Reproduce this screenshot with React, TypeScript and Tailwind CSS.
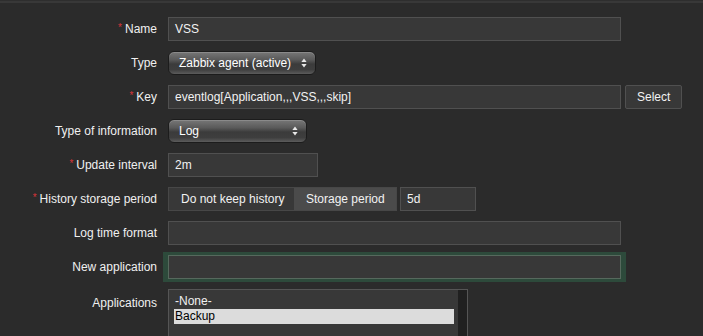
import React from 'react'

const font = { fontFamily: '"Liberation Sans", Arial, sans-serif' }

const Req = () => <span className="text-[#d8343a] text-[10px] relative -top-[2px] mr-[3px]">*</span>

const Label = ({ text, req }: { text: string; req?: boolean }) => (
  <div className="w-[158px] shrink-0 text-right text-[12px] text-[#f0f0f0] pr-[1px]">
    {req && <Req />}
    {text}
  </div>
)

const Input = ({ value = '', w, focus }: { value?: string; w: string; focus?: boolean }) => (
  <div
    className={`${w} h-[24px] flex items-center px-[6px] text-[12px] text-[#f2f2f2] bg-[#383838] border ${
      focus
        ? 'border-[#56695d] shadow-[-2px_0_0_3px_#2d4a3b,2px_0_0_3px_#2d4a3b]'
        : 'border-[#505050]'
    }`}
  >
    {value}
  </div>
)

const Arrows = () => (
  <svg width="6" height="10" viewBox="0 0 6 10" className="shrink-0">
    <path d="M3 0.5 L5.6 4 H0.4 Z" fill="#e8e8e8" />
    <path d="M3 9.5 L5.6 6 H0.4 Z" fill="#e8e8e8" />
  </svg>
)

const Select = ({ value, w }: { value: string; w: string }) => (
  <div
    className={`${w} h-[24px] flex items-center justify-between pl-[10px] pr-[8px] rounded-[6px] border border-[#1c1c1c] text-[12px] text-white bg-[linear-gradient(to_bottom,#777_0%,#5a5a5a_35%,#3b3b3b_55%,#3e3e3e_80%,#5c5c5c_100%)] shadow-[inset_0_1px_0_#8a8a8a]`}
  >
    <span>{value}</span>
    <Arrows />
  </div>
)

const Row = ({ children }: { children: React.ReactNode }) => (
  <div className="flex items-center gap-[10px] h-[24px]">{children}</div>
)

export default function App() {
  return (
    <div className="w-[703px] h-[336px] overflow-hidden bg-[#2b2b2b]" style={font}>
      <div className="h-[1px] bg-[#2e2e2e]" />
      <div className="h-[2px] bg-[#383838]" />
      <div className="flex flex-col gap-[10px] pt-[14px]">
        <Row>
          <Label text="Name" req />
          <Input value="VSS" w="w-[453px]" />
        </Row>
        <Row>
          <Label text="Type" />
          <Select value="Zabbix agent (active)" w="w-[148px]" />
        </Row>
        <Row>
          <Label text="Key" req />
          <Input value="eventlog[Application,,,VSS,,,skip]" w="w-[453px]" />
          <button className="-ml-[6px] h-[24px] px-[11px] text-[12px] text-[#f2f2f2] bg-[#383838] border border-[#505050] rounded-[2px]">
            Select
          </button>
        </Row>
        <Row>
          <Label text="Type of information" />
          <Select value="Log" w="w-[139px]" />
        </Row>
        <Row>
          <Label text="Update interval" req />
          <Input value="2m" w="w-[150px]" />
        </Row>
        <Row>
          <Label text="History storage period" req />
          <div className="flex h-[24px] border border-[#474747] text-[12px] text-[#f2f2f2]">
            <div className="w-[125px] flex items-center pl-[12px] bg-[#383838]">Do not keep history</div>
            <div className="w-[102px] flex items-center pl-[12px] bg-[#4b4b4b]">Storage period</div>
          </div>
          <Input value="5d" w="w-[76px] -ml-[7px]" />
        </Row>
        <Row>
          <Label text="Log time format" />
          <Input w="w-[453px]" />
        </Row>
        <Row>
          <Label text="New application" />
          <Input w="w-[453px]" focus />
        </Row>
        <div className="flex items-start gap-[10px]">
          <div className="pt-[5px]">
            <Label text="Applications" />
          </div>
          <div className="w-[300px] h-[80px] flex border border-[#555] bg-[#383838]">
            <div className="flex-1 pl-[5px] pr-[4px] pt-[4px] text-[12px] leading-[15px]">
              <div className="pl-[1px] text-[#f0f0f0]">-None-</div>
              <div className="pl-[1px] bg-[#dcdcdc] text-black">Backup</div>
            </div>
            <div className="w-[9px] bg-[#202020]" />
          </div>
        </div>
      </div>
    </div>
  )
}
